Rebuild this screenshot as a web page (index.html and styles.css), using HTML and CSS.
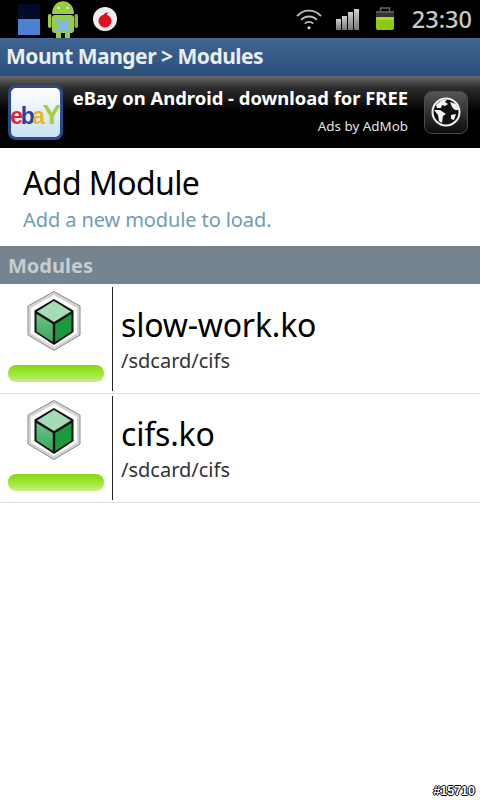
FILE: index.html
```html
<!DOCTYPE html>
<html lang="en">

<head>
  <meta charset="utf-8" />
  <meta name="viewport" content="width=device-width, initial-scale=1.0">
  <title>Mount Manger</title>
  <link rel="stylesheet" href="styles.css">
</head>

<body>

  <svg class="defs" width="0" height="0">
    <defs>
      <linearGradient id="left-face" x1="0" y1="0" x2="0" y2="1">
        <stop offset="0" stop-color="#6cc489" />
        <stop offset="1" stop-color="#3aa55e" />
      </linearGradient>
      <symbol id="cube" viewBox="0 0 54 60">
        <path d="M27 0.500 L53 15 V44 L27 59.500 L1 44 V15 Z" fill="#d4d4d4" stroke="#8a8a8a" stroke-width="1" />
        <path d="M27 4 L50 17 V42.500 L27 56 L4 42.500 V17 Z" fill="#fff" />
        <path d="M27 8 L46.500 19.500 V41 L27 54 L7.500 41 V19.500 Z" fill="#111" />
        <path d="M27 10 L44 20.500 L27 31 L10 20.500 Z" fill="#a4dcb8" />
        <path d="M9.500 23 L25.800 33 V51 L9.500 40.500 Z" fill="url(#left-face)" />
        <path d="M44.500 23 L28.200 33 V51 L44.500 40.500 Z" fill="#1b9a3d" />
      </symbol>
    </defs>
  </svg>

  <header class="status">
    <div class="status-left">
      <span class="storage"></span>
      <svg class="android" width="30" height="38" viewBox="0 0 30 38">
        <path d="M4 14 C4 -3 26 -3 26 14 Z" fill="#9ccb45" />
        <rect x="4" y="15" width="22" height="18" rx="3" fill="#9ccb45" />
        <rect x="0" y="14" width="3.500" height="14" rx="1.700" fill="#9ccb45" />
        <rect x="26.500" y="14" width="3.500" height="14" rx="1.700" fill="#8ab63c" />
        <rect x="8" y="32" width="5" height="6" fill="#9ccb45" />
        <rect x="17" y="32" width="5" height="6" fill="#9ccb45" />
        <circle cx="10.500" cy="8" r="1" fill="#fff" />
        <circle cx="19.500" cy="8" r="1" fill="#fff" />
        <path d="M6 18 L15 21 L24 18 L19 25 L24 33 L15 30 L6 33 L11 25 Z" fill="#7fb8e6" />
      </svg>
      <svg class="vodafone" width="26" height="26" viewBox="0 0 26 26">
        <circle cx="13" cy="13" r="12" fill="#eee" />
        <circle cx="13" cy="15" r="6.500" fill="#e01020" />
        <path d="M11.500 9 C13 6 16 6 16.500 7 C15 7.500 14.500 9 14.500 11 Z" fill="#e01020" />
      </svg>
    </div>
    <div class="status-right">
      <svg width="28" height="24" viewBox="0 0 30 26" fill="none" stroke="#bdbdbd" stroke-width="2">
        <path d="M2 10 C9 2 21 2 28 10" />
        <path d="M6.500 14 C11 9 19 9 23.500 14" />
        <path d="M10.500 18 C13 15.500 17 15.500 19.500 18" />
        <circle cx="15" cy="22.500" r="1.700" fill="#d8d8d8" stroke="none" />
      </svg>
      <div class="signal">
        <span class="bar-1"></span>
        <span class="bar-2"></span>
        <span class="bar-3"></span>
        <span class="bar-4"></span>
      </div>
      <svg class="battery" width="20" height="26" viewBox="0 0 20 26">
        <path d="M5.500 6 V2 H14.500 V6" fill="none" stroke="#666" stroke-width="1.500" />
        <rect x="1" y="5" width="18" height="2" fill="#555" />
        <rect x="1" y="11" width="18" height="13" rx="2" fill="#8fc80e" />
        <rect x="1" y="7" width="18" height="5" fill="#333" />
        <rect x="1" y="11" width="18" height="3" rx="1" fill="#a6dc22" />
      </svg>
      <span class="clock">23:30</span>
    </div>
  </header>

  <div class="title-bar">Mount Manger &gt; Modules</div>

  <div class="ad">
    <div class="ad-logo">
      <span class="ebay"><span class="e">e</span><span class="b">b</span><span class="a">a</span><span class="y">Y</span></span>
    </div>
    <div class="ad-text">
      <div class="ad-title">eBay on Android - download for FREE</div>
      <div class="ad-by">Ads by AdMob</div>
    </div>
    <div class="ad-globe">
      <svg width="32" height="32" viewBox="0 0 32 32">
        <circle cx="16" cy="16" r="13.500" fill="#111" stroke="#f2f2f2" stroke-width="2" />
        <path d="M6 9 C9 5 13 3 17 3.500 L15 6 L18 8 L15 10 L12 9 L11 12 L7 12 Z" fill="#f2f2f2" />
        <path d="M4 14 L10 14 L16 18 L13 20 L12 27 L9 25 L8 19 Z" fill="#f2f2f2" />
        <path d="M20 6 L26 8 L29 14 L25 14 L22 11 Z" fill="#f2f2f2" />
        <path d="M21 19 L26 18 L24 24 L21 23 Z" fill="#f2f2f2" />
      </svg>
    </div>
  </div>

  <div class="add-module">
    <div class="add-title">Add Module</div>
    <div class="add-sub">Add a new module to load.</div>
  </div>

  <div class="section">Modules</div>

  <div class="row">
    <div class="row-icon">
      <svg class="cube" width="54" height="60"><use href="#cube" /></svg>
      <div class="loaded"></div>
    </div>
    <div class="row-text">
      <div class="row-name">slow-work.ko</div>
      <div class="row-path">/sdcard/cifs</div>
    </div>
  </div>

  <div class="row">
    <div class="row-icon">
      <svg class="cube" width="54" height="60"><use href="#cube" /></svg>
      <div class="loaded"></div>
    </div>
    <div class="row-text">
      <div class="row-name">cifs.ko</div>
      <div class="row-path">/sdcard/cifs</div>
    </div>
  </div>

  <div class="watermark">#15710</div>

</body>

</html>
```

FILE: styles.css
```css
html,
body {
  height: 100%;
}

body {
  font-family: "Noto Sans", "Open Sans", sans-serif;
  margin: 0;
  padding: 0;
  background-color: #fff;
  overflow: hidden;
  position: relative;
}

.defs {
  display: block;
  height: 0;
}

.status {
  height: 38px;
  background-color: #000;
  display: flex;
  justify-content: space-between;
  align-items: center;
}

.status-left {
  display: flex;
  align-items: center;
  padding-left: 18px;
}

.storage {
  width: 22px;
  height: 31px;
  background: linear-gradient(#020a2c 0 50%, #4f7fd0 50%);
}

.android {
  margin-left: 8px;
}

.vodafone {
  margin-left: 14px;
}

.status-right {
  display: flex;
  align-items: center;
  padding-right: 8px;
}

.signal {
  display: flex;
  align-items: flex-end;
  gap: 1px;
  height: 22px;
  margin-left: 13px;
}

.signal span {
  width: 5px;
  background: linear-gradient(#cfcfcf, #777);
}

.signal .bar-1 {
  height: 11px;
}

.signal .bar-2 {
  height: 14px;
}

.signal .bar-3 {
  height: 18px;
}

.signal .bar-4 {
  height: 21px;
}

.battery {
  margin-left: 16px;
}

.clock {
  margin-left: 17px;
  color: #c8c8c8;
  font-size: 23.500px;
  font-weight: 500;
  line-height: 38px;
}

.title-bar {
  height: 38px;
  line-height: 37px;
  padding-left: 6px;
  background: linear-gradient(#3f6690, #2a4f7c);
  color: #e8edf2;
  font-size: 21px;
  font-weight: 700;
  letter-spacing: -0.500px;
}

.ad {
  height: 72px;
  box-sizing: border-box;
  padding: 0 12px 0 8px;
  background: linear-gradient(#6a6a6a 0, #2c2c2c 12px, #000 36px);
  display: flex;
  align-items: center;
}

.ad-logo {
  width: 55px;
  height: 55px;
  box-sizing: border-box;
  border: 3px solid #2a4a8c;
  border-radius: 8px;
  background: linear-gradient(#fff, #c8e2f5);
  display: flex;
  align-items: center;
  justify-content: center;
}

.ebay {
  font-family: "Liberation Sans", sans-serif;
  font-size: 23px;
  font-weight: 700;
  letter-spacing: -2.500px;
  padding-right: 2px;
  padding-top: 6px;
}

.ebay .e {
  color: #e0252f;
}

.ebay .b {
  color: #2b3fa0;
}

.ebay .a {
  color: #e8b820;
}

.ebay .y {
  color: #a8cc3c;
  font-size: 28px;
}

.ad-text {
  flex: 1;
  color: #fff;
  text-align: right;
  padding-right: 16px;
}

.ad-title {
  font-size: 18.400px;
  font-weight: 700;
  line-height: 24px;
  margin-top: -4px;
  white-space: nowrap;
}

.ad-by {
  font-size: 13.400px;
  line-height: 18px;
  margin-top: 7px;
  color: #e4e4e4;
}

.ad-globe {
  width: 44px;
  height: 43px;
  border-radius: 8px;
  border: 1px solid #4a4a4a;
  box-sizing: border-box;
  background: linear-gradient(#555, #0c0c0c);
  display: flex;
  align-items: center;
  justify-content: center;
}

.add-module {
  height: 98px;
  box-sizing: border-box;
  padding: 14px 0 0 23px;
}

.add-title {
  font-size: 32px;
  line-height: 42px;
  color: #000;
  letter-spacing: -0.600px;
}

.add-sub {
  font-size: 20px;
  line-height: 28px;
  margin-top: 2px;
  color: #6f9cb5;
  letter-spacing: -0.100px;
}

.section {
  height: 38px;
  line-height: 39px;
  margin-bottom: 1px;
  padding-left: 8px;
  background-color: #76848f;
  color: #c6ccd1;
  font-size: 20px;
  font-weight: 700;
}

.row {
  height: 109px;
  box-sizing: border-box;
  border-bottom: 1px solid #e2e2e2;
  display: flex;
}

.row-icon {
  width: 113px;
  height: 104px;
  margin-top: 2px;
  box-sizing: border-box;
  border-right: 1px solid #222;
  display: flex;
  flex-direction: column;
  align-items: center;
}

.cube {
  margin: 4px 4px 0 0;
}

.loaded {
  width: 96px;
  height: 17px;
  margin-top: 14px;
  border-radius: 8px;
  background: linear-gradient(#84d814, #a4e83c 60%, #c9f08c);
}

.row-text {
  padding: 18px 0 0 8px;
}

.row-name {
  font-size: 32px;
  line-height: 44px;
  color: #000;
  letter-spacing: -0.200px;
}

.row-path {
  font-size: 20px;
  line-height: 27px;
  color: #333;
}

.watermark {
  position: absolute;
  right: 5px;
  bottom: 2px;
  font-family: "Liberation Sans", sans-serif;
  font-size: 12.500px;
  font-weight: 700;
  color: #fff;
  text-shadow: 1px 0 0 #000, -1px 0 0 #000, 0 1px 0 #000, 0 -1px 0 #000;
}
```
